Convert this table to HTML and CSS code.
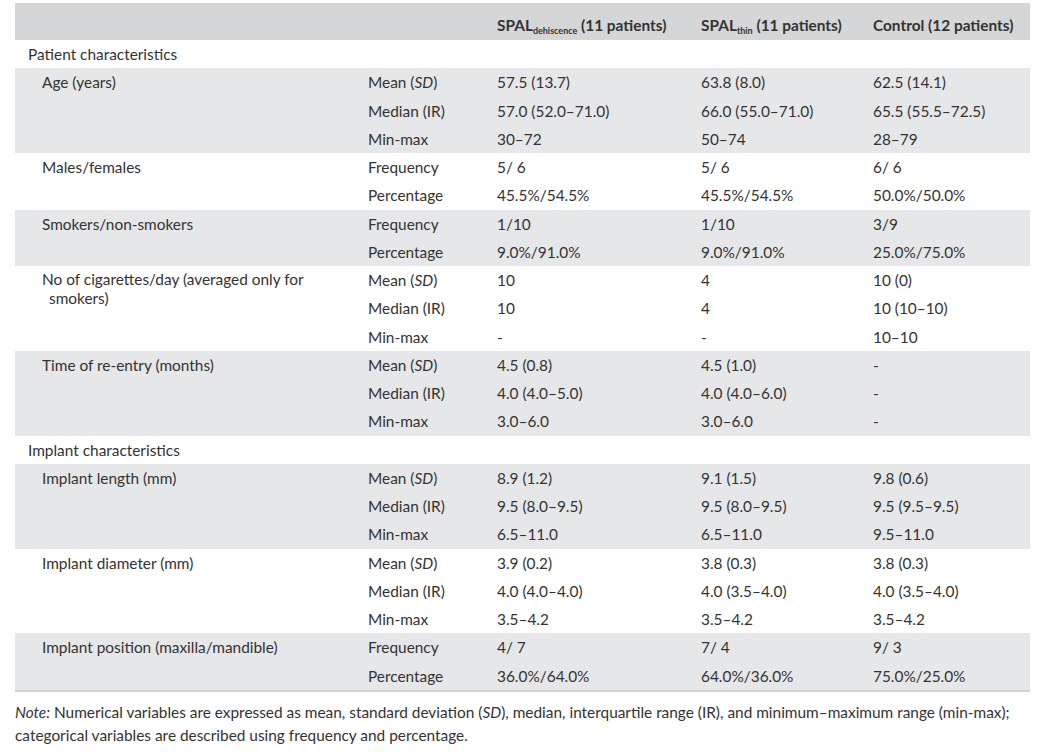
FILE: index.html
```html
<!DOCTYPE html>
<html>
<head>
<meta charset="utf-8">
<link rel="stylesheet" href="styles.css">
</head>
<body>
<div class="wrap">
<table class="data">
  <colgroup>
    <col class="c1"><col class="c2"><col class="c3"><col class="c4"><col class="c5">
  </colgroup>
  <thead>
    <tr>
      <th></th><th></th>
      <th>SPAL<sub>dehiscence</sub> (11 patients)</th>
      <th>SPAL<sub>thin</sub> (11 patients)</th>
      <th>Control (12 patients)</th>
    </tr>
  </thead>
  <tbody>
    <tr><td class="sec" colspan="5">Patient characteristics</td></tr>
  </tbody>
  <tbody class="shade">
    <tr><td class="lab" rowspan="3">Age (years)</td><td>Mean (<i>SD</i>)</td><td>57.5 (13.7)</td><td>63.8 (8.0)</td><td>62.5 (14.1)</td></tr>
    <tr><td>Median (IR)</td><td>57.0 (52.0–71.0)</td><td>66.0 (55.0–71.0)</td><td>65.5 (55.5–72.5)</td></tr>
    <tr><td>Min-max</td><td>30–72</td><td>50–74</td><td>28–79</td></tr>
  </tbody>
  <tbody>
    <tr><td class="lab" rowspan="2">Males/females</td><td>Frequency</td><td>5/ 6</td><td>5/ 6</td><td>6/ 6</td></tr>
    <tr><td>Percentage</td><td>45.5%/54.5%</td><td>45.5%/54.5%</td><td>50.0%/50.0%</td></tr>
  </tbody>
  <tbody class="shade">
    <tr><td class="lab" rowspan="2">Smokers/non-smokers</td><td>Frequency</td><td>1/10</td><td>1/10</td><td>3/9</td></tr>
    <tr><td>Percentage</td><td>9.0%/91.0%</td><td>9.0%/91.0%</td><td>25.0%/75.0%</td></tr>
  </tbody>
  <tbody>
    <tr><td class="lab wrapl" rowspan="3">No of cigarettes/day (averaged only for smokers)</td><td>Mean (<i>SD</i>)</td><td>10</td><td>4</td><td>10 (0)</td></tr>
    <tr><td>Median (IR)</td><td>10</td><td>4</td><td>10 (10–10)</td></tr>
    <tr><td>Min-max</td><td>-</td><td>-</td><td>10–10</td></tr>
  </tbody>
  <tbody class="shade">
    <tr><td class="lab" rowspan="3">Time of re-entry (months)</td><td>Mean (<i>SD</i>)</td><td>4.5 (0.8)</td><td>4.5 (1.0)</td><td>-</td></tr>
    <tr><td>Median (IR)</td><td>4.0 (4.0–5.0)</td><td>4.0 (4.0–6.0)</td><td>-</td></tr>
    <tr><td>Min-max</td><td>3.0–6.0</td><td>3.0–6.0</td><td>-</td></tr>
  </tbody>
  <tbody>
    <tr><td class="sec" colspan="5">Implant characteristics</td></tr>
  </tbody>
  <tbody class="shade">
    <tr><td class="lab" rowspan="3">Implant length (mm)</td><td>Mean (<i>SD</i>)</td><td>8.9 (1.2)</td><td>9.1 (1.5)</td><td>9.8 (0.6)</td></tr>
    <tr><td>Median (IR)</td><td>9.5 (8.0–9.5)</td><td>9.5 (8.0–9.5)</td><td>9.5 (9.5–9.5)</td></tr>
    <tr><td>Min-max</td><td>6.5–11.0</td><td>6.5–11.0</td><td>9.5–11.0</td></tr>
  </tbody>
  <tbody>
    <tr><td class="lab" rowspan="3">Implant diameter (mm)</td><td>Mean (<i>SD</i>)</td><td>3.9 (0.2)</td><td>3.8 (0.3)</td><td>3.8 (0.3)</td></tr>
    <tr><td>Median (IR)</td><td>4.0 (4.0–4.0)</td><td>4.0 (3.5–4.0)</td><td>4.0 (3.5–4.0)</td></tr>
    <tr><td>Min-max</td><td>3.5–4.2</td><td>3.5–4.2</td><td>3.5–4.2</td></tr>
  </tbody>
  <tbody class="shade last">
    <tr><td class="lab" rowspan="2">Implant position (maxilla/mandible)</td><td>Frequency</td><td>4/ 7</td><td>7/ 4</td><td>9/ 3</td></tr>
    <tr><td>Percentage</td><td>36.0%/64.0%</td><td>64.0%/36.0%</td><td>75.0%/25.0%</td></tr>
  </tbody>
</table>
<p class="note"><i>Note:</i> Numerical variables are expressed as mean, standard deviation (<i>SD</i>), median, interquartile range (IR), and minimum–maximum range (min-max); categorical variables are described using frequency and percentage.</p>
</div>
</body>
</html>
```

FILE: styles.css
```css
html, body {
  margin: 0;
  padding: 0;
  background: #ffffff;
}
body {
  font-family: Lato, "Open Sans", sans-serif;
  font-size: 15.4px;
  color: #333333;
}
.wrap {
  padding: 3px 17px 0 15px;
}
.data {
  width: 1015px;
  border-collapse: collapse;
  table-layout: fixed;
}
.c1 { width: 340px; }
.c2 { width: 129px; }
.c3 { width: 204px; }
.c4 { width: 172px; }
.c5 { width: 170px; }
.data th {
  background: #d5d6d8;
  height: 37px;
  box-sizing: border-box;
  padding: 0 8px 5px 13px;
  text-align: left;
  vertical-align: bottom;
  font-weight: 700;
  line-height: 20px;
  white-space: nowrap;
}
.data th sub {
  font-size: 9px;
  vertical-align: -3px;
  line-height: 0;
}
.data td {
  height: 28.26px;
  box-sizing: border-box;
  padding: 4px 13px;
  line-height: 20px;
  vertical-align: top;
}
.data td.lab {
  padding-left: 27px;
}
.data td.wrapl {
  padding-left: 34px;
  text-indent: -7px;
  line-height: 19px;
  padding-right: 30px;
}
.shade td {
  background: #e6e7e8;
}
.data tbody.last {
  border-bottom: 2px solid #d2d3d5;
}
.note {
  margin: 9px 0 0;
  line-height: 23px;
  padding-right: 0;
}
```
